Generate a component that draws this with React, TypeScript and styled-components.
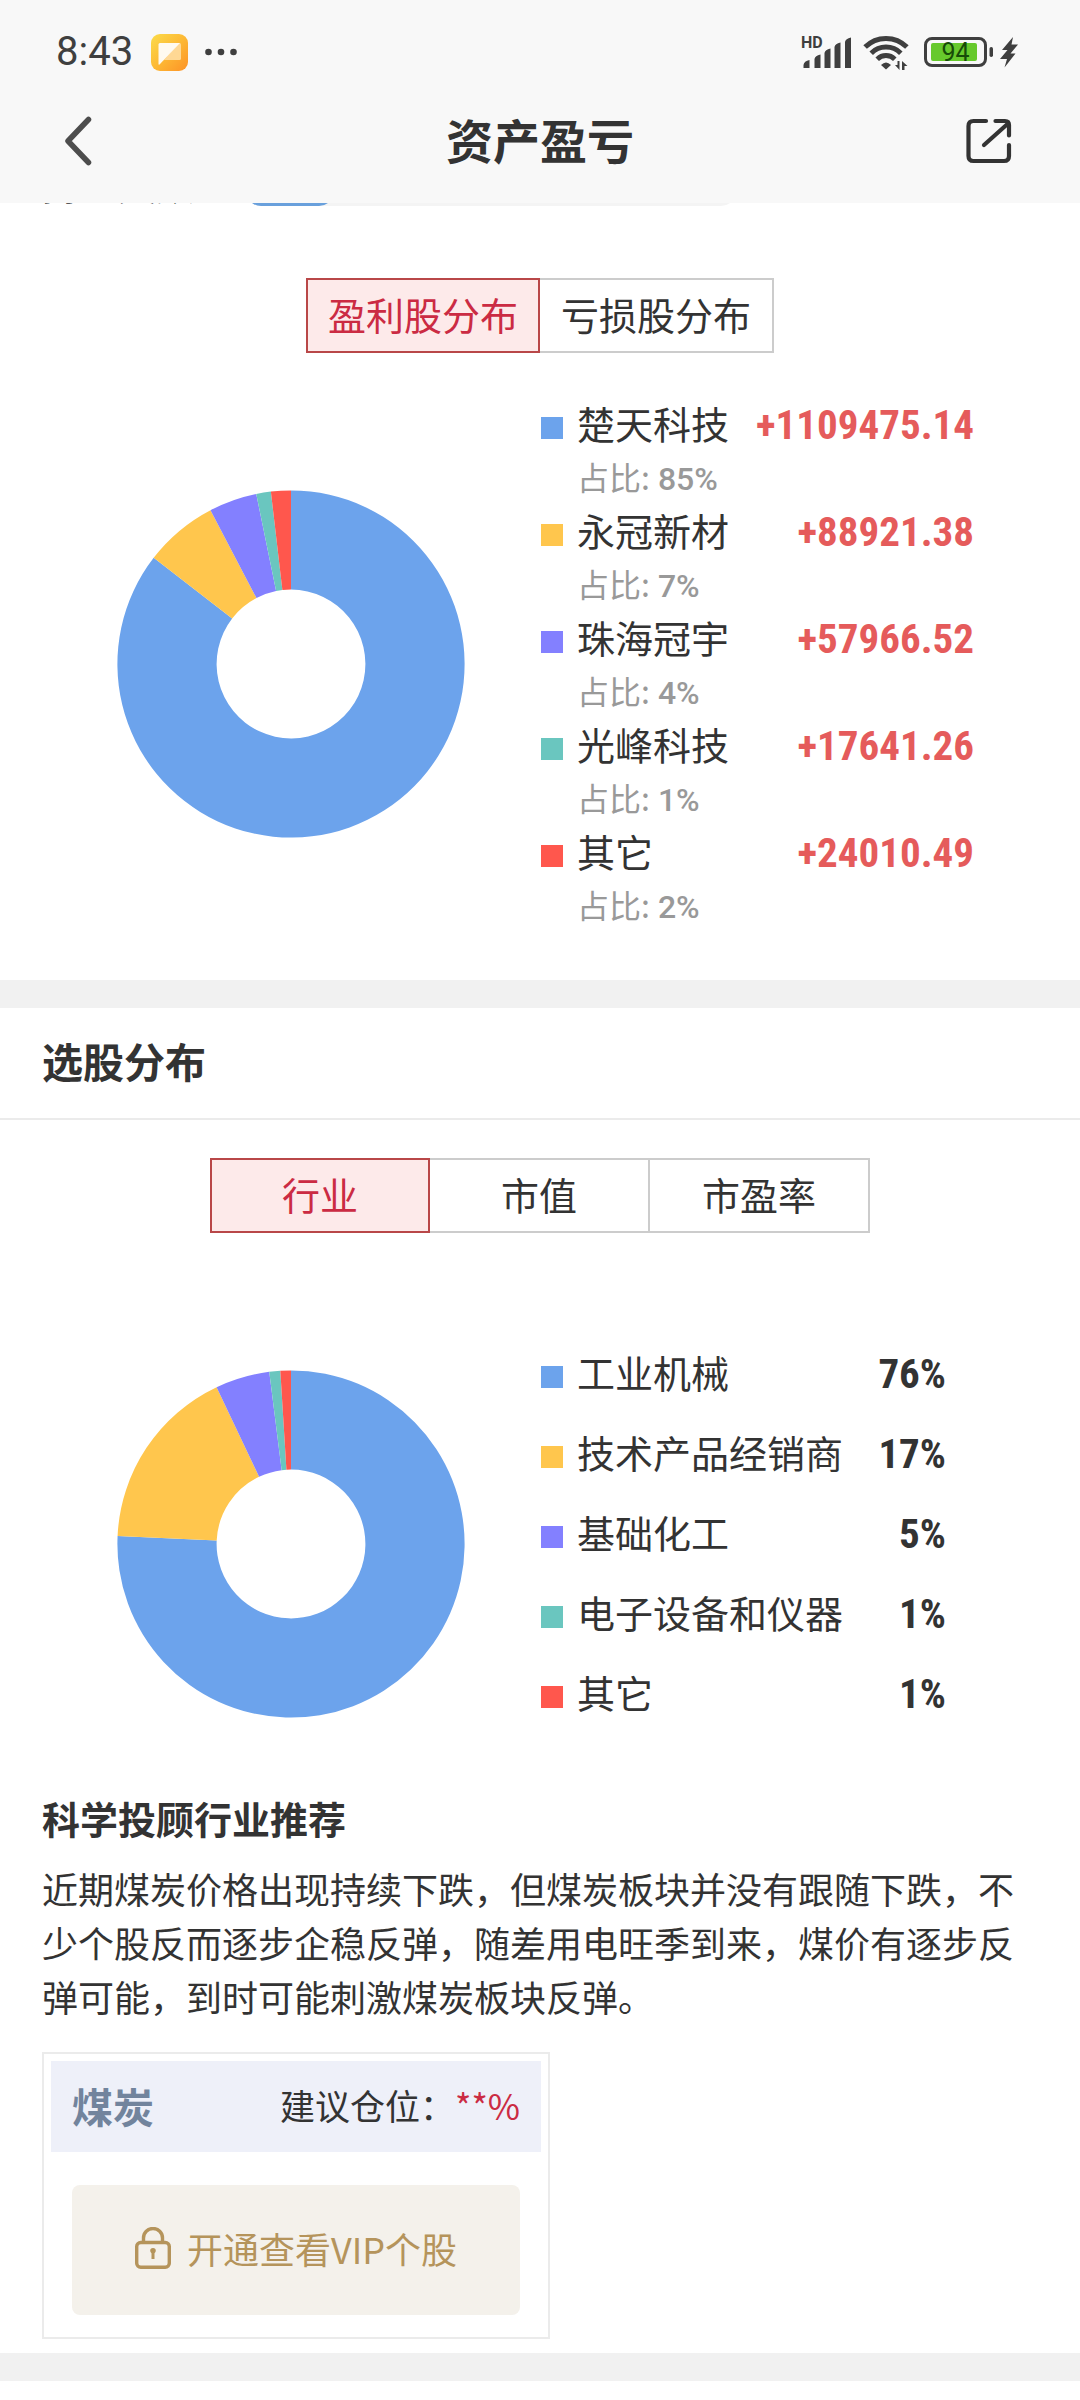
import React, { useState } from "react";
import styled, { createGlobalStyle } from "styled-components";

const GlobalStyle = createGlobalStyle`
  * { box-sizing: border-box; }
  body {
    margin: 0;
    background: #ffffff;
    color: #333333;
    font-family: "Noto Sans CJK SC", sans-serif;
    font-size: 38px;
  }
  button { font-family: inherit; cursor: pointer; }
  h1, h2, h3, p, ul { margin: 0; padding: 0; }
  ul { list-style: none; }
  svg { display: block; flex: none; }
`;

const numberFont = `"Roboto Condensed", "Liberation Sans Narrow", Roboto, sans-serif`;

const Header = styled.header`
  background: #f8f8f8;
`;

const StatusBar = styled.div`
  display: flex;
  align-items: center;
  justify-content: space-between;
  height: 78px;
  padding: 26px 61px 0 56px;
  color: #3f3f3f;
`;

const StatusGroup = styled.div`
  display: flex;
  align-items: center;
`;

const Clock = styled.span`
  margin-right: 18px;
  font: 400 40px/52px Roboto, sans-serif;
`;

const NavBar = styled.div`
  display: grid;
  grid-template-columns: 1fr auto 1fr;
  align-items: center;
  height: 125px;
  padding: 0 64px;
`;

const IconButton = styled.button<{ $end?: boolean }>`
  justify-self: ${(p) => (p.$end ? "end" : "start")};
  padding: 0;
  border: 0;
  background: none;
  color: #333333;
`;

const PageTitle = styled.h1`
  padding-bottom: 3px;
  font-size: 47px;
  line-height: 60px;
  font-weight: 700;
`;

const ScrolledRow = styled.div`
  display: flex;
  align-items: flex-end;
  height: 3px;
  padding: 0 42px;
  overflow: hidden;
`;

const ScrolledLabel = styled.span`
  width: 204px;
  line-height: 44px;
`;

const Track = styled.div`
  width: 490px;
  height: 30px;
  border-radius: 15px;
  background: #f4f4f4;
`;

const TrackFill = styled.div`
  height: 30px;
  border-radius: 15px;
  background: #69a0dc;
`;

const Band = styled.div`
  height: 28px;
  background: #f1f1f1;
`;

const Segments = styled.div<{ $top: number; $each: number }>`
  display: grid;
  grid-auto-flow: column;
  grid-auto-columns: ${(p) => p.$each}px;
  justify-content: center;
  margin-top: ${(p) => p.$top}px;
`;

const Segment = styled.button<{ $active: boolean }>`
  height: 75px;
  padding: 0 0 4px;
  border: 2px solid ${(p) => (p.$active ? "#b94748" : "#cccccc")};
  border-left-width: ${(p) => (p.$active ? 2 : 0)}px;
  background: ${(p) => (p.$active ? "#fdeaea" : "#ffffff")};
  color: ${(p) => (p.$active ? "#cb2b43" : "#333333")};
  font-size: 38px;
  line-height: 54px;
  &:first-child { border-left-width: 2px; }
`;

const ChartRow = styled.div<{ $top: number }>`
  display: grid;
  grid-template-columns: 1fr 1fr;
  align-items: center;
  margin-top: ${(p) => p.$top}px;
  padding: 0 42px;
`;

const ChartCell = styled.div`
  display: flex;
  justify-content: center;
`;

const Legend = styled.ul<{ $inset: number; $bottom?: number }>`
  padding: 0 ${(p) => p.$inset}px ${(p) => p.$bottom ?? 0}px 1px;
`;

const LegendLine = styled.div<{ $height: number }>`
  display: flex;
  align-items: baseline;
  height: ${(p) => p.$height}px;
  line-height: ${(p) => p.$height}px;
`;

const Swatch = styled.span<{ $color: string }>`
  width: 22px;
  height: 22px;
  margin-right: 14px;
  background: ${(p) => p.$color};
`;

const Value = styled.span<{ $gain?: boolean }>`
  margin-left: auto;
  color: ${(p) => (p.$gain ? "#e55b5b" : "#333333")};
  font-family: ${numberFont};
  font-size: 41px;
  font-weight: 700;
`;

const Share = styled.div`
  display: flex;
  align-items: baseline;
  gap: 8px;
  height: 53px;
  padding-left: 36px;
  color: #999999;
  font-size: 32px;
  line-height: 53px;
`;

const ShareValue = styled.span`
  font-family: Roboto, sans-serif;
  font-weight: 500;
`;

const ProfitSection = styled.section`
  padding-bottom: 49px;
`;

const SectionTitle = styled.h2`
  height: 112px;
  padding: 22px 42px 0;
  border-bottom: 2px solid #ebebeb;
  font-size: 41px;
  line-height: 60px;
  font-weight: 700;
`;

const Advice = styled.section`
  margin-top: 35px;
  padding: 0 42px 14px;
`;

const AdviceTitle = styled.h3`
  font-size: 38px;
  line-height: 54px;
  font-weight: 700;
`;

const AdviceText = styled.p`
  margin-top: 16px;
  font-size: 36px;
  line-height: 54px;
`;

const Card = styled.article`
  width: 508px;
  max-width: 100%;
  margin-top: 29px;
  padding: 7px 7px 22px;
  border: 2px solid #ebebeb;
`;

const CardHead = styled.div`
  display: flex;
  align-items: center;
  justify-content: space-between;
  height: 91px;
  padding: 0 21px 4px;
  background: #eef0f9;
`;

const Sector = styled.strong`
  color: #72849d;
  font-size: 41px;
  line-height: 54px;
`;

const Position = styled.span`
  font-size: 35px;
  line-height: 54px;
`;

const Hidden = styled.span`
  color: #cb2b43;
`;

const VipButton = styled.button`
  display: flex;
  align-items: center;
  justify-content: center;
  gap: 16px;
  width: calc(100% - 42px);
  height: 130px;
  margin: 33px 21px 0;
  padding: 0 0 4px;
  border: 0;
  border-radius: 8px;
  background: #f4f1eb;
  color: #b5945b;
  font-size: 36px;
  line-height: 54px;
`;

const palette = ["#6ca3ec", "#ffc64d", "#8380ff", "#6ac6bf", "#ff574d"];

const stocks = [
  { name: "楚天科技", amount: 1109475.14, share: "85%" },
  { name: "永冠新材", amount: 88921.38, share: "7%" },
  { name: "珠海冠宇", amount: 57966.52, share: "4%" },
  { name: "光峰科技", amount: 17641.26, share: "1%" },
  { name: "其它", amount: 24010.49, share: "2%" },
];

const sectors = [
  { name: "工业机械", weight: 75.74, share: "76%" },
  { name: "技术产品经销商", weight: 17.21, share: "17%" },
  { name: "基础化工", weight: 5.05, share: "5%" },
  { name: "电子设备和仪器", weight: 1.02, share: "1%" },
  { name: "其它", weight: 0.98, share: "1%" },
];

function Donut({ values, label }: { values: number[]; label: string }) {
  const total = values.reduce((a, b) => a + b, 0);
  const c = 174;
  const outer = 173.6;
  const inner = 74.4;
  let sum = 0;
  const point = (r: number, share: number) => {
    const a = share * Math.PI * 2;
    return `${c + r * Math.sin(a)} ${c - r * Math.cos(a)}`;
  };
  return (
    <svg width="348" height="348" viewBox="0 0 348 348" role="img" aria-label={label}>
      {values.map((v, i) => {
        const from = sum / total;
        sum += v;
        const to = sum / total;
        const large = to - from > 0.5 ? 1 : 0;
        return (
          <path
            key={i}
            fill={palette[i]}
            d={`M${point(outer, from)} A${outer} ${outer} 0 ${large} 1 ${point(outer, to)} L${point(inner, to)} A${inner} ${inner} 0 ${large} 0 ${point(inner, from)}Z`}
          />
        );
      })}
    </svg>
  );
}

function Tabs({ items, top, each }: { items: string[]; top: number; each: number }) {
  const [current, setCurrent] = useState(0);
  return (
    <Segments $top={top} $each={each}>
      {items.map((item, i) => (
        <Segment key={item} type="button" $active={i === current} aria-pressed={i === current} onClick={() => setCurrent(i)}>
          {item}
        </Segment>
      ))}
    </Segments>
  );
}

function AppBadge() {
  return (
    <svg width="37" height="37" viewBox="0 0 37 37" aria-hidden="true">
      <defs>
        <linearGradient id="badge" x1="0" y1="0" x2="1" y2="1">
          <stop offset="0" stopColor="#fbdc4a" />
          <stop offset="0.5" stopColor="#fdb935" />
          <stop offset="1" stopColor="#fd9226" />
        </linearGradient>
      </defs>
      <rect width="37" height="37" rx="9" fill="url(#badge)" />
      <path d="M28 9 H28.500 Q30 9 30 10.500 V24.500 Q30 26 28.500 26 H13Z" fill="#ffd894" />
      <path d="M9 9 H29 L8.500 30.500 Q7.500 31 7.500 30 V10.500 Q7.500 9 9 9Z" fill="#fffaf0" />
    </svg>
  );
}

function Dots() {
  return (
    <svg width="50" height="36" viewBox="0 0 50 36" fill="currentColor" aria-hidden="true">
      <circle cx="20.500" cy="18" r="3.300" />
      <circle cx="33" cy="18" r="3.300" />
      <circle cx="45.500" cy="18" r="3.300" />
    </svg>
  );
}

function StatusIcons() {
  return (
    <svg width="218" height="36" viewBox="0 0 218 36" fill="currentColor" overflow="visible" aria-hidden="true">
      <text x="0" y="14" fontFamily="Roboto, sans-serif" fontSize="16" fontWeight="700">HD</text>
      <path d="M2.500 34 V31 Q3 27 8.500 26 V34Z M13.500 34 V25 Q14 21.500 19.500 20.500 V34Z M23.500 34 V19 Q24 15.500 29.500 14.500 V34Z M33.500 34 V13 Q34 9.500 39.500 8.500 V34Z M44 34 V8 Q44.500 4.500 50 3.500 V34Z" />
      <g fill="none" stroke="currentColor" strokeWidth="5">
        <path d="M64.100 13.100 A29.500 29.500 0 0 1 105.900 13.100" />
        <path d="M70.200 19.200 A21 21 0 0 1 99.800 19.200" />
        <path d="M76.200 25.200 A12.500 12.500 0 0 1 93.800 25.200" />
      </g>
      <path d="M80 31 Q85 26 90 31 L85 35.500Z" />
      <path d="M98.500 27 V36 L94 31 H96.500 V27Z M101 36 V27 L106.500 32 H103.500 V36Z" />
      <rect x="124.500" y="4.500" width="60" height="27" rx="6.500" fill="none" stroke="currentColor" strokeWidth="3" />
      <rect x="130" y="9" width="46" height="18" rx="2" fill="#67c92c" />
      <text x="154.500" y="27" textAnchor="middle" fontFamily="Roboto, sans-serif" fontSize="25" fill="#174b08">94</text>
      <rect x="188.500" y="13" width="3.500" height="10" rx="1.700" />
      <path d="M212 3 L201 16 H206.500 L199 25 H206 L203.500 33.500 L214.500 19.500 H209.500 L217 10.500 H210.500Z" />
    </svg>
  );
}

function LockIcon() {
  return (
    <svg width="36" height="42" viewBox="0 0 36 42" fill="none" stroke="currentColor" strokeWidth="3.400" aria-hidden="true">
      <rect x="1.700" y="15.500" width="32.600" height="24.800" rx="4" />
      <path d="M8.500 15 V11 A9.500 9.500 0 0 1 27.500 11 V15" />
      <path d="M18 21 A2.800 2.800 0 0 1 20.800 23.800 Q20.800 25.200 19.500 26.200 V32 H16.500 V26.200 Q15.200 25.200 15.200 23.800 A2.800 2.800 0 0 1 18 21Z" fill="currentColor" stroke="none" />
    </svg>
  );
}

export default function App() {
  return (
    <>
      <GlobalStyle />
      <Header>
        <StatusBar>
          <StatusGroup>
            <Clock>8:43</Clock>
            <AppBadge />
            <Dots />
          </StatusGroup>
          <StatusIcons />
        </StatusBar>
        <NavBar>
          <IconButton type="button" aria-label="返回">
            <svg width="28" height="50" viewBox="0 0 28 50" fill="none" stroke="#4d4d4d" strokeWidth="5.500" strokeLinecap="round" strokeLinejoin="round">
              <path d="M24.500 3.500 L4 25 L24.500 46.500" />
            </svg>
          </IconButton>
          <PageTitle>资产盈亏</PageTitle>
          <IconButton type="button" aria-label="分享" $end>
            <svg width="50" height="46" viewBox="0 0 50 46" fill="none" stroke="currentColor" strokeWidth="4.200" strokeLinecap="round" strokeLinejoin="round">
              <path d="M20 3 H7.500 Q2.500 3 2.500 8 V38 Q2.500 43 7.500 43 H38 Q43 43 43 38 V27" />
              <path d="M29.500 3 H39 Q43 3 43 7 V17.500" />
              <path d="M18 27 L41.500 6" />
            </svg>
          </IconButton>
        </NavBar>
      </Header>

      <main>
        <ProfitSection>
          <ScrolledRow>
            <ScrolledLabel>持仓天数</ScrolledLabel>
            <Track>
              <TrackFill style={{ width: "18%" }} />
            </Track>
          </ScrolledRow>
          <Tabs items={["盈利股分布", "亏损股分布"]} top={72} each={234} />
          <ChartRow $top={43}>
            <ChartCell>
              <Donut values={stocks.map((s) => s.amount)} label="盈利股分布" />
            </ChartCell>
            <Legend $inset={64}>
              {stocks.map((s, i) => (
                <li key={s.name}>
                  <LegendLine $height={54}>
                    <Swatch $color={palette[i]} />
                    <span>{s.name}</span>
                    <Value $gain>+{s.amount.toFixed(2)}</Value>
                  </LegendLine>
                  <Share>
                    占比: <ShareValue>{s.share}</ShareValue>
                  </Share>
                </li>
              ))}
            </Legend>
          </ChartRow>
        </ProfitSection>

        <Band />

        <section>
          <SectionTitle>选股分布</SectionTitle>
          <Tabs items={["行业", "市值", "市盈率"]} top={38} each={220} />
          <ChartRow $top={99}>
            <ChartCell>
              <Donut values={sectors.map((s) => s.weight)} label="行业分布" />
            </ChartCell>
            <Legend $inset={92} $bottom={24}>
              {sectors.map((s, i) => (
                <li key={s.name}>
                  <LegendLine $height={80}>
                    <Swatch $color={palette[i]} />
                    <span>{s.name}</span>
                    <Value>{s.share}</Value>
                  </LegendLine>
                </li>
              ))}
            </Legend>
          </ChartRow>
        </section>

        <Advice>
          <AdviceTitle>科学投顾行业推荐</AdviceTitle>
          <AdviceText>
            近期煤炭价格出现持续下跌，但煤炭板块并没有跟随下跌，不少个股反而逐步企稳反弹，随差用电旺季到来，煤价有逐步反弹可能，到时可能刺激煤炭板块反弹。
          </AdviceText>
          <Card>
            <CardHead>
              <Sector>煤炭</Sector>
              <Position>
                建议仓位：<Hidden>**%</Hidden>
              </Position>
            </CardHead>
            <VipButton type="button">
              <LockIcon />
              开通查看VIP个股
            </VipButton>
          </Card>
        </Advice>

        <Band />
      </main>
    </>
  );
}
